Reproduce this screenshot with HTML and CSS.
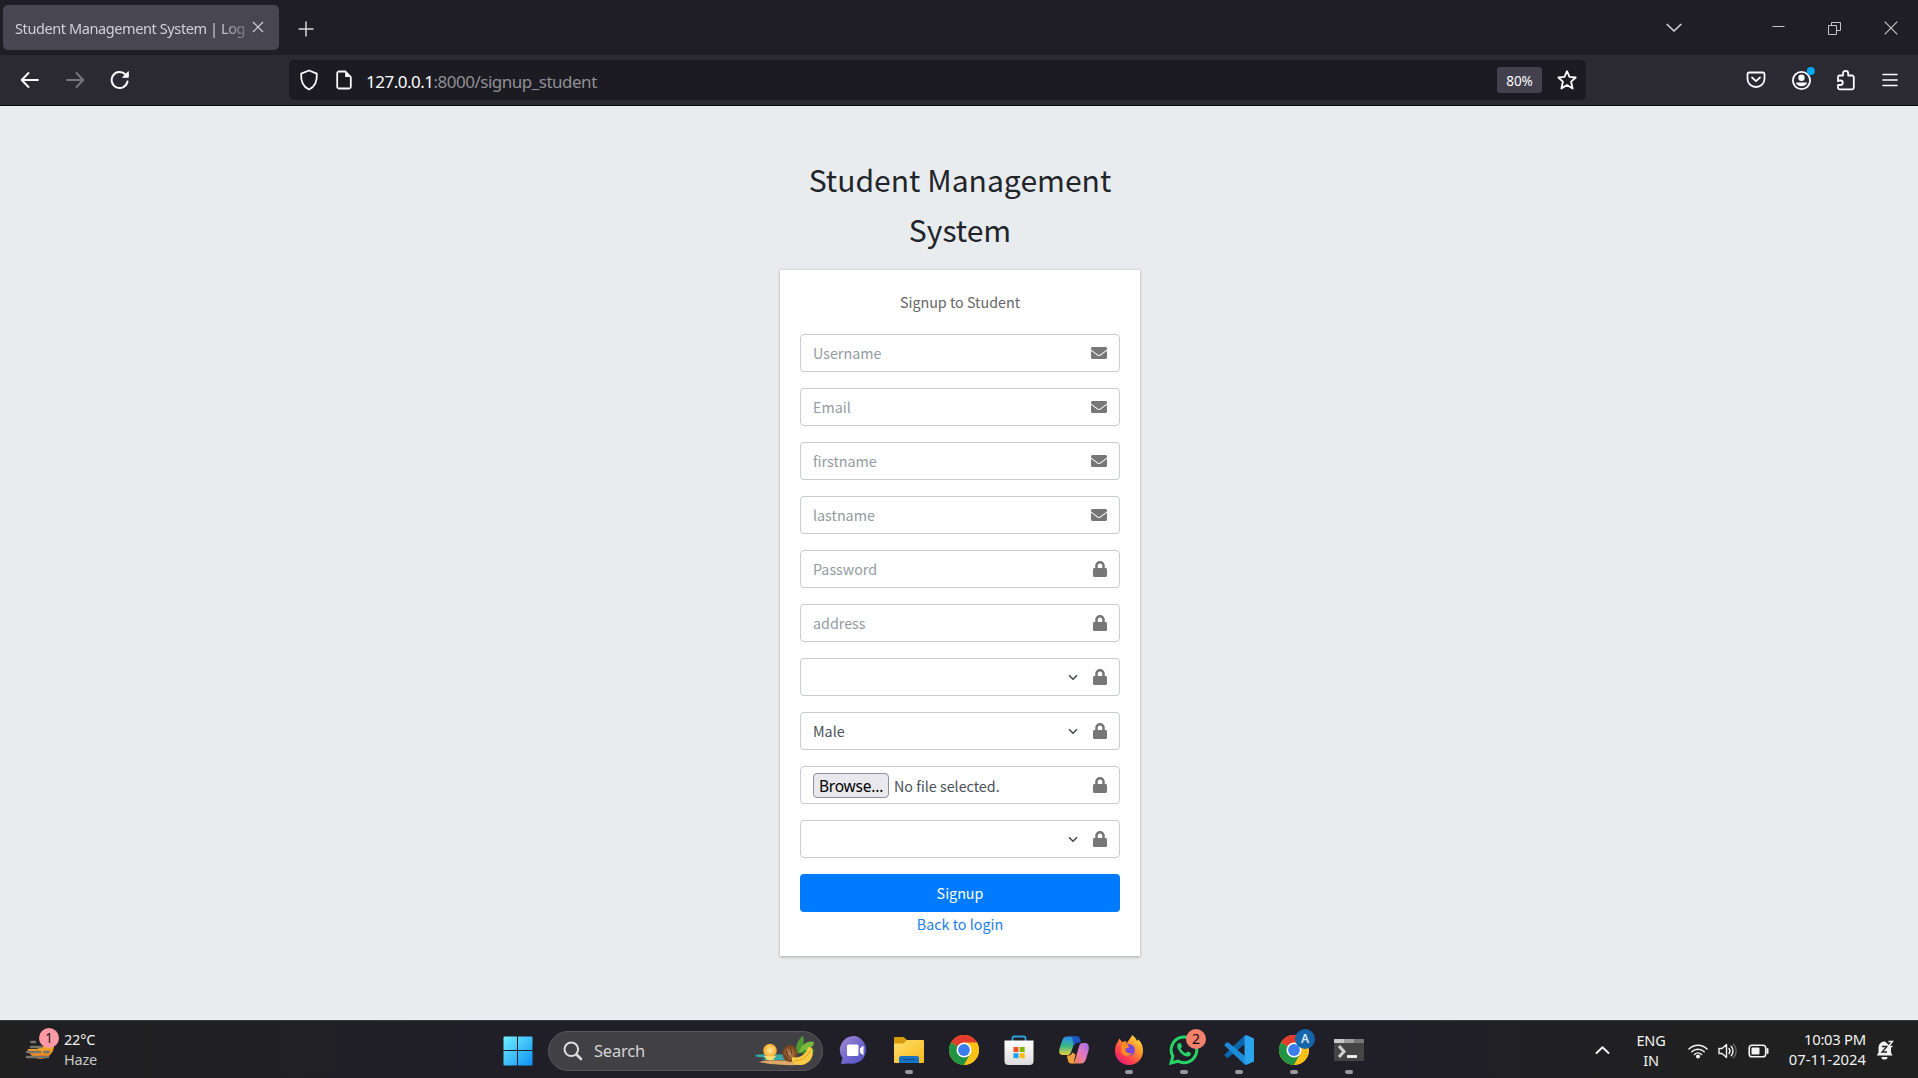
FILE: index.html
```html
<!DOCTYPE html>
<html lang="en">
<head>
<meta charset="utf-8">
<title>Student Management System | Log in</title>
<link rel="stylesheet" href="styles.css">
</head>
<body>
<svg class="defs" width="0" height="0" aria-hidden="true">
  <defs>
    <symbol id="lock" viewBox="0 0 448 512"><path fill="currentColor" d="M400 224h-24v-72C376 68.2 307.8 0 224 0S72 68.2 72 152v72H48c-26.5 0-48 21.5-48 48v192c0 26.5 21.5 48 48 48h352c26.5 0 48-21.5 48-48V272c0-26.5-21.5-48-48-48zm-104 0H152v-72c0-39.7 32.3-72 72-72s72 32.3 72 72v72z"/></symbol>
    <symbol id="envelope" viewBox="0 0 512 512"><path fill="currentColor" d="M502.3 190.8c3.9-3.1 9.7-.2 9.7 4.7V400c0 26.5-21.5 48-48 48H48c-26.5 0-48-21.5-48-48V195.6c0-5 5.7-7.8 9.7-4.7 22.4 17.4 52.1 39.5 154.1 113.6 21.1 15.4 56.7 47.8 92.2 47.6 35.7.3 72-32.8 92.3-47.6 102-74.1 131.6-96.3 154-113.7zM256 320c23.2.4 56.6-29.2 73.4-41.4 132.7-96.3 142.8-104.7 173.4-128.7 5.8-4.5 9.2-11.5 9.2-18.9v-19c0-26.5-21.5-48-48-48H48c-26.5 0-48 21.5-48 48v19c0 7.4 3.4 14.3 9.2 18.9 30.6 23.9 40.7 32.4 173.4 128.7 16.8 12.2 50.2 41.8 73.4 41.4z"/></symbol>
    <symbol id="caret" viewBox="0 0 10 7"><path d="M1 1.2 5 5.2 9 1.2" fill="none" stroke="#40464c" stroke-width="1.5"/></symbol>
    <symbol id="chrome" viewBox="0 0 30 30">
      <circle cx="15" cy="15" r="15" fill="#fbc116"/>
      <path d="M15 15 2 7.500A15 15 0 0 1 28 7.500Z" fill="#e33b2e"/>
      <path d="M2 7.500A15 15 0 0 0 15 30L21.500 18.750 15 15Z" fill="#229342"/>
      <path d="M15 7.500H28A15 15 0 0 1 15 30L21.500 18.750Z" fill="#fbc116"/>
      <circle cx="15" cy="15" r="7.500" fill="#fff"/><circle cx="15" cy="15" r="5.900" fill="#3b7ded"/>
    </symbol>
  </defs>
</svg>

<header class="browser">
  <div class="tab-strip">
    <div class="tab">
      <span class="tab-title">Student Management System | Log</span>
      <svg class="tab-close" width="12" height="12" viewBox="0 0 12 12"><path d="M1 1 11 11M11 1 1 11" stroke="#d4d3da" stroke-width="1.200"/></svg>
    </div>
    <svg class="new-tab" width="16" height="16" viewBox="0 0 16 16"><path d="M8 .5V15.500M.5 8H15.500" stroke="#d8d8dc" stroke-width="1.500"/></svg>
    <div class="window-controls">
      <svg class="list-tabs" width="16" height="10" viewBox="0 0 16 10"><path d="M1.200 1.500 8 8 14.800 1.500" fill="none" stroke="#d0d0d4" stroke-width="1.700" stroke-linecap="round" stroke-linejoin="round"/></svg>
      <svg width="13" height="14" viewBox="0 0 13 14"><path d="M.5 5.500H12.500" stroke="#c4c4c8"/></svg>
      <svg width="13" height="14" viewBox="0 0 13 14"><path d="M.5 4.500h8v9h-8zM3.500 4.500V1.500h9v8h-4" fill="none" stroke="#c4c4c8"/></svg>
      <svg width="14" height="14" viewBox="0 0 14 14"><path d="M.7.7 13.300 13.300M13.300.7.7 13.300" stroke="#c4c4c8" stroke-width="1.200"/></svg>
    </div>
  </div>
  <div class="toolbar">
    <nav class="nav-buttons">
      <svg width="20" height="18" viewBox="0 0 20 18" fill="none" stroke="#fbfbfe" stroke-width="1.900" stroke-linecap="round" stroke-linejoin="round"><path d="M18 9H2M8.500 2 1.700 9 8.500 16"/></svg>
      <svg width="20" height="18" viewBox="0 0 20 18" fill="none" stroke="#77767e" stroke-width="1.900" stroke-linecap="round" stroke-linejoin="round"><path d="M2 9H18M11.500 2 18.300 9 11.500 16"/></svg>
      <svg width="20" height="20" viewBox="0 0 20 20" fill="none" stroke="#fbfbfe" stroke-width="2" stroke-linecap="round"><path d="M17.500 11.500A8 8 0 1 1 15.500 4.500"/><path d="M18.300 2v5.300h-5.300z" fill="#fbfbfe" stroke-width="1" stroke-linejoin="round"/></svg>
    </nav>
    <div class="url-bar">
      <svg width="20" height="22" viewBox="0 0 20 22"><path d="M10 1.500 17.800 4.600C18.300 12 15.500 18 10 20.500 4.500 18 1.700 12 2.200 4.600Z" fill="none" stroke="#fbfbfe" stroke-width="1.800" stroke-linejoin="round"/></svg>
      <svg width="16" height="20" viewBox="0 0 16 20"><path d="M9.500 1.500H3A1.800 1.800 0 0 0 1.200 3.300V16.700A1.800 1.800 0 0 0 3 18.500H13A1.800 1.800 0 0 0 14.800 16.700V7Z" fill="none" stroke="#fbfbfe" stroke-width="1.800" stroke-linejoin="round"/><path d="M9.200 1.500V7H14.800Z" fill="#fbfbfe"/></svg>
      <span class="url"><b>127.0.0.1</b>:8000/signup_student</span>
      <span class="zoom-level">80%</span>
      <svg class="bookmark" width="22" height="22" viewBox="0 0 22 22"><path d="M11 2.200 13.500 7.900 19.700 8.500 15.100 12.700 16.600 19.500 11 16 5.400 19.500 6.900 12.700 2.300 8.500 8.500 7.900Z" fill="none" stroke="#fbfbfe" stroke-width="1.800" stroke-linejoin="round"/></svg>
    </div>
    <div class="extensions">
      <svg width="20" height="20" viewBox="0 0 20 20" fill="none" stroke="#fbfbfe" stroke-width="1.800" stroke-linecap="round" stroke-linejoin="round"><path d="M3 2.500H17A1.600 1.600 0 0 1 18.500 4V9A8.500 8 0 0 1 1.500 9V4A1.600 1.600 0 0 1 3 2.500ZM6 7.500 10 11.200 14 7.500"/></svg>
      <svg width="24" height="26" viewBox="0 0 24 26"><circle cx="10.500" cy="14.500" r="8.600" fill="none" stroke="#fbfbfe" stroke-width="1.800"/><circle cx="10.500" cy="11.800" r="3.200" fill="#fbfbfe"/><path d="M5 16.500H16C15.500 19 13.200 20.300 10.500 20.300S5.500 19 5 16.500Z" fill="#fbfbfe"/><circle cx="19.800" cy="5" r="4" fill="#00a9f4"/></svg>
      <svg width="20" height="22" viewBox="0 0 20 22"><path d="M2 13V9.500C2 6.500 2.500 6.500 4 6.500H7V4.500A2.600 2.600 0 0 1 12.200 4.500V6.500H16A1.800 1.800 0 0 1 17.800 8.300V18.500A1.800 1.800 0 0 1 16 20.300H3.800A1.800 1.800 0 0 1 2 18.500V16H4.500A2.200 2.200 0 0 0 4.500 11.500H2" fill="none" stroke="#fbfbfe" stroke-width="1.800" stroke-linejoin="round"/></svg>
      <svg width="16" height="14" viewBox="0 0 16 14"><path d="M1 1.500H15M1 7H15M1 12.500H15" stroke="#fbfbfe" stroke-width="1.600" stroke-linecap="round"/></svg>
    </div>
  </div>
</header>

<main class="page">
  <h1 class="site-title">Student Management System</h1>
  <section class="card">
    <p class="card-message">Signup to Student</p>
    <form class="form">
      <div class="field"><span class="placeholder">Username</span><svg class="icon-envelope"><use href="#envelope"/></svg></div>
      <div class="field"><span class="placeholder">Email</span><svg class="icon-envelope"><use href="#envelope"/></svg></div>
      <div class="field"><span class="placeholder">firstname</span><svg class="icon-envelope"><use href="#envelope"/></svg></div>
      <div class="field"><span class="placeholder">lastname</span><svg class="icon-envelope"><use href="#envelope"/></svg></div>
      <div class="field"><span class="placeholder">Password</span><svg class="icon-lock"><use href="#lock"/></svg></div>
      <div class="field"><span class="placeholder">address</span><svg class="icon-lock"><use href="#lock"/></svg></div>
      <div class="field"><span class="value"></span><svg class="caret"><use href="#caret"/></svg><svg class="icon-lock"><use href="#lock"/></svg></div>
      <div class="field"><span class="value">Male</span><svg class="caret"><use href="#caret"/></svg><svg class="icon-lock"><use href="#lock"/></svg></div>
      <div class="field"><span class="browse">Browse...</span><span class="value file-name">No file selected.</span><svg class="icon-lock"><use href="#lock"/></svg></div>
      <div class="field"><span class="value"></span><svg class="caret"><use href="#caret"/></svg><svg class="icon-lock"><use href="#lock"/></svg></div>
      <button class="submit" type="button">Signup</button>
    </form>
    <a class="back-link">Back to login</a>
  </section>
</main>

<footer class="taskbar">
  <div class="weather">
    <div class="weather-icon">
      <svg width="30" height="26" viewBox="0 0 30 26">
        <defs><linearGradient id="sun" x1="0" y1="0" x2="0" y2="1"><stop offset="0" stop-color="#f5b52f"/><stop offset="1" stop-color="#ec7a16"/></linearGradient></defs>
        <path d="M2.500 11A13.500 13.500 0 0 0 29 8L24 6 12 11Z" fill="url(#sun)"/>
        <g stroke="#77736d" stroke-width="2.600" stroke-linecap="round"><path d="M6.500 4H10M6 9H16M2 14H15M2 19H23M19.500 14H23.500"/></g>
      </svg>
      <span class="badge badge-weather">1</span>
    </div>
    <div class="weather-text"><span class="temp">22°C</span><span class="cond">Haze</span></div>
  </div>

  <div class="apps">
    <svg class="start" width="30" height="30" viewBox="0 0 30 30">
      <defs><linearGradient id="win" x1="0" y1="0" x2="1" y2="1"><stop offset="0" stop-color="#72f0ff"/><stop offset="1" stop-color="#0b90f5"/></linearGradient></defs>
      <path fill="url(#win)" d="M1.500.5H14V14H.5V1.500A1 1 0 0 1 1.500.5ZM15 .5H28.500A1 1 0 0 1 29.500 1.500V14H15ZM.5 15H14V29.500H1.500A1 1 0 0 1 .5 28.500ZM15 15H29.500V28.500A1 1 0 0 1 28.500 29.500H15Z"/>
    </svg>
    <div class="search">
      <svg width="20" height="20" viewBox="0 0 20 20" fill="none" stroke="#dededf" stroke-linecap="round"><circle cx="8.300" cy="8.300" r="6.800" stroke-width="2"/><path d="M13.500 13.500 18 18" stroke-width="2.600"/></svg>
      <span class="search-label">Search</span>
      <svg width="62" height="32" viewBox="0 0 62 32">
        <defs><radialGradient id="glow"><stop offset="0" stop-color="#ffe9a0"/><stop offset="1" stop-color="#f9a826"/></radialGradient><radialGradient id="coco"><stop offset="0" stop-color="#c08a50"/><stop offset="1" stop-color="#6d3f1d"/></radialGradient></defs>
        <path d="M1 20C8 18.500 26 19 34 20L32 25H8L12 23 2 21.500Z" fill="#35a6a4"/>
        <path d="M5 27C14 24 26 26 40 25.500L48 29.500C36 31 26 29.500 16 29Z" fill="#dfa867"/>
        <circle cx="16" cy="15.500" r="6.800" fill="url(#glow)"/><path d="M10 21H22L19 25H13Z" fill="#f8dc72"/>
        <path d="M42 19C41 10 45 3 49 1 51 6 49 13 46 18Z" fill="#4f9a36"/><path d="M45 18C47 9 54 5 60 7 60 13 52 17 45 18Z" fill="#78b83c"/><path d="M47 18C51 14 57 13 61 15 58 20 52 20 47 18Z" fill="#3b8431"/>
        <ellipse cx="36" cy="18.500" rx="7.500" ry="8.500" fill="url(#coco)"/><path d="M32 16 35 23M36 12 38 19M31 20 33 25" stroke="#5b3317" stroke-width="1"/>
        <path d="M38 22C46 24 52 19 54 12L58 13C61 22 55 30 46 30 40 30 37 27 38 22Z" fill="#f9cb45"/><path d="M40 26C48 26 54 21 56.500 15" fill="none" stroke="#d39a28" stroke-width=".9"/>
      </svg>
    </div>
    <div class="dock">
      <div class="app">
        <svg width="30" height="30" viewBox="0 0 30 30"><defs><linearGradient id="chat" x1="0" y1="0" x2="1" y2="1"><stop offset="0" stop-color="#a58ad0"/><stop offset=".6" stop-color="#6a63cc"/><stop offset="1" stop-color="#4b50bf"/></linearGradient></defs><path d="M16 1A14 14 0 1 1 10 28.500L2 29 3.500 23A14 14 0 0 1 16 1Z" fill="url(#chat)"/><rect x="8" y="9.500" width="11.500" height="11.500" rx="1.500" fill="#fff"/><path d="M21 13.500 24.500 10.500V20.500L21 17.500Z" fill="#fff"/></svg>
      </div>
      <div class="app running">
        <svg width="30" height="30" viewBox="0 0 30 30"><defs><linearGradient id="fold" x1="0" y1="0" x2="1" y2="1"><stop offset="0" stop-color="#ffdf6c"/><stop offset="1" stop-color="#f6b91c"/></linearGradient></defs><path d="M0 3A1 1 0 0 1 1 2H9.500L13 5V12H0Z" fill="#d59b0a"/><path d="M0 8.500H9L13 5H29A1 1 0 0 1 30 6V27A1 1 0 0 1 29 28H1A1 1 0 0 1 0 27Z" fill="url(#fold)"/><path d="M5 28V23A2 2 0 0 1 7 21H23A2 2 0 0 1 25 23V28Z" fill="#1773c4"/><path d="M9 24.500H21" stroke="#0c4f94" stroke-width="1.200"/></svg>
      </div>
      <div class="app"><svg width="30" height="30"><use href="#chrome"/></svg></div>
      <div class="app">
        <svg width="30" height="30" viewBox="0 0 30 30"><defs><linearGradient id="bag" x1="0" y1="0" x2="0" y2="1"><stop offset="0" stop-color="#fff"/><stop offset="1" stop-color="#dcdcdd"/></linearGradient></defs><path d="M8.500 6V3A1.500 1.500 0 0 1 10 1.500H20A1.500 1.500 0 0 1 21.500 3V6" fill="none" stroke="#2aa2de" stroke-width="1.800"/><path d="M.5 5.500H29.500V26A4 4 0 0 1 25.500 30H4.500A4 4 0 0 1 .5 26Z" fill="url(#bag)"/><path d="M9.500 12H14.500V17H9.500Z" fill="#f04f23"/><path d="M15.700 12H20.700V17H15.700Z" fill="#7db700"/><path d="M9.500 18.200H14.500V23.200H9.500Z" fill="#1ba0e8"/><path d="M15.700 18.200H20.700V23.200H15.700Z" fill="#fdb813"/></svg>
      </div>
      <div class="app">
        <svg width="30" height="30" viewBox="0 0 30 30"><defs><linearGradient id="co1" x1="0" y1="0" x2="0" y2="1"><stop offset="0" stop-color="#2a8df0"/><stop offset=".5" stop-color="#35b58d"/><stop offset="1" stop-color="#e9d03a"/></linearGradient><linearGradient id="co2" x1="1" y1="0" x2="0" y2="1"><stop offset="0" stop-color="#a06cf2"/><stop offset=".5" stop-color="#e77ab5"/><stop offset="1" stop-color="#f8853e"/></linearGradient></defs><path d="M8 1.500H18L15.500 7 12 17.500C11 19.500 10 20 8 20H4C0 20-.5 17.500.7 13L3 6C4 2.500 6 1.500 8 1.500Z" fill="url(#co1)"/><path d="M13 1.500H18.500C20.500 1.500 21.300 4 22 7.500H19.500C17 7.500 16 8.500 15 11.500Z" fill="#1c55c4"/><path d="M8 20.500C11 20.500 12.500 20 13.500 17.500L16.500 19.500 14.500 28.500H12C9.500 28.500 8.500 25 8 20.500Z" fill="#f0a03c"/><path d="M22 28.500H13C15.500 27.500 16 25.500 17 22L20 11.500C20.800 9 22 8 24 8H26C30 8 30.500 12 29.300 16.500L27 24C26 27 24.500 28.500 22 28.500Z" fill="url(#co2)"/></svg>
      </div>
      <div class="app running">
        <svg width="30" height="30" viewBox="0 0 30 30"><defs><linearGradient id="ff" x1="1" y1="0" x2="0.200" y2="1"><stop offset="0" stop-color="#fff04f"/><stop offset=".4" stop-color="#ff9a2b"/><stop offset=".75" stop-color="#ff3d4d"/><stop offset="1" stop-color="#e3177f"/></linearGradient></defs><path d="M18.500 0C20.500 2 22 3.500 23 6L24.500 4.500C28 8 29 12 29 16A14 14 0 0 1 1 16C1 11 2.500 8.500 4 6.500L5.500 3.500 8 7 12 6 12.500 8.500C15 5 16.500 3 18.500 0Z" fill="url(#ff)"/><circle cx="15" cy="15" r="6" fill="#7b45d6"/><path d="M8 7 14 10 15 12.500 11.500 13.500C11 17 14 19.500 18 18 15 23 7 21 7 15Z" fill="#ff8b22"/></svg>
      </div>
      <div class="app running">
        <svg width="30" height="30" viewBox="0 0 30 30"><path d="M2 28 3.900 21.300A12.800 12.800 0 1 1 9 26.200Z" fill="none" stroke="#27d366" stroke-width="3"/><path d="M10 8C8 9 7.500 11 9 14 11 18 14.500 21 18 21.500 20.500 22 22 20 22 18L18.500 16.500 16.800 18.300C14.500 17.500 12.500 15.500 11.600 13.500L13 11.700 11.800 8.200Z" fill="#27d366"/></svg>
        <span class="badge badge-chat">2</span>
      </div>
      <div class="app running">
        <svg width="30" height="30" viewBox="0 0 30 30"><path d="M21.500 8.500 4 22.800 2.800 22.800.6 20.500V19.500L20 1 21.500 0Z" fill="#0b67ad"/><path d="M21.500 21.500 4 7.200H2.800L.6 9.500V10.500L20 29 21.500 30Z" fill="#1c8bd8"/><path d="M22 0 30 3.500V26.500L22 30 20.500 28V2Z" fill="#2ba4f0"/></svg>
      </div>
      <div class="app running">
        <svg width="30" height="30"><use href="#chrome"/></svg>
        <span class="badge badge-profile">A</span>
      </div>
      <div class="app running">
        <svg width="30" height="30" viewBox="0 0 30 30"><path d="M0 4H30V25A1 1 0 0 1 29 26H1A1 1 0 0 1 0 25Z" fill="#454545"/><path d="M0 8V5A1 1 0 0 1 1 4H10V8Z" fill="#c9c9c9"/><path d="M10 4H20V8H10Z" fill="#9d9d9d"/><path d="M20 4H29A1 1 0 0 1 30 5V8H20Z" fill="#777"/><path d="M5 11 10 16.500 5 22" fill="none" stroke="#cfcfcf" stroke-width="3"/><path d="M13 21.500H23" stroke="#f4f4f4" stroke-width="2.800"/></svg>
      </div>
    </div>
  </div>

  <div class="tray">
    <svg class="tray-up" width="15" height="10" viewBox="0 0 15 10"><path d="M1.500 8 7.500 2.200 13.500 8" fill="none" stroke="#f2f2f2" stroke-width="1.900" stroke-linecap="round" stroke-linejoin="round"/></svg>
    <div class="lang"><span>ENG</span><span>IN</span></div>
    <div class="status">
      <svg width="20" height="16" viewBox="0 0 20 16" fill="none" stroke="#f2f2f2" stroke-width="1.500" stroke-linecap="round"><path d="M1 6A12.500 12.500 0 0 1 19 6M3.800 8.800A8.700 8.700 0 0 1 16.200 8.800M6.500 11.500A5 5 0 0 1 13.500 11.500"/><circle cx="10" cy="13.500" r="1.300" fill="#f2f2f2"/></svg>
      <svg width="20" height="18" viewBox="0 0 20 18" fill="none" stroke="#f2f2f2" stroke-width="1.400" stroke-linecap="round" stroke-linejoin="round"><path d="M1 6.500H4L8.500 2.500V15.500L4 11.500H1Z"/><path d="M11 6.500A4 4 0 0 1 11 11.500M13.200 4.300A7 7 0 0 1 13.200 13.700"/><path d="M15.500 2.200A10 10 0 0 1 15.500 15.800" stroke="#66666a"/></svg>
      <svg width="21" height="14" viewBox="0 0 21 14"><rect x="1.200" y="1.200" width="16.500" height="11.500" rx="2.800" fill="none" stroke="#f2f2f2" stroke-width="1.600"/><rect x="3.500" y="3.500" width="8" height="7" rx="1" fill="#f2f2f2"/><path d="M19.500 5V9" stroke="#f2f2f2" stroke-width="2" stroke-linecap="round"/></svg>
    </div>
    <div class="clock"><span class="time">10:03 PM</span><span class="date">07-11-2024</span></div>
    <svg class="bell" width="18" height="20" viewBox="0 0 18 20"><path d="M2.500 7A6 6 0 0 1 9 1.500L15 7V12.500L16.500 15.500H.8L2.500 12.500Z" fill="#f2f2f2"/><path d="M5.500 17H11.500A3 2.600 0 0 1 5.500 17Z" fill="#f2f2f2"/><path d="M6 6.500H11L6 12H11" fill="none" stroke="#222224" stroke-width="1.300"/><path d="M12.500 1.500H16.500L12.500 6.500H16.500" fill="none" stroke="#f2f2f2" stroke-width="1.400"/></svg>
  </div>
</footer>
</body>
</html>
```
FILE: styles.css
```css
* { box-sizing: border-box; }

body {
  margin: 0;
  width: 1918px;
  height: 1078px;
  display: grid;
  grid-template-rows: 106px 914px 58px;
  overflow: hidden;
  background: #e9ecef;
  font-family: "Noto Sans", "Open Sans", sans-serif;
}

.defs { position: absolute; }
svg { display: block; flex: none; }

/* Browser chrome */
.browser {
  display: grid;
  grid-template-rows: 55px 50px;
  border-bottom: 1px solid #0c0c0d;
  background: #2b2a33;
}

.tab-strip {
  display: flex;
  align-items: center;
  padding-left: 3px;
  background: #1f1e25;
}

.tab {
  display: flex;
  align-items: center;
  width: 276px;
  height: 45px;
  padding: 0 15px 0 12px;
  border-radius: 5px;
  background: #484653;
}

.tab-title {
  width: 231px;
  overflow: hidden;
  white-space: nowrap;
  font-size: 14.5px;
  letter-spacing: -0.4px;
  color: #d2d1d8;
  -webkit-mask-image: linear-gradient(90deg, #000 88%, rgba(0, 0, 0, .3));
  mask-image: linear-gradient(90deg, #000 88%, rgba(0, 0, 0, .3));
}

.tab-close { margin: 0 0 1px 6px; }
.new-tab { margin: 2px 0 0 19px; }

.window-controls {
  display: flex;
  align-items: center;
  gap: 43px;
  margin-left: auto;
  padding-right: 20px;
}

.list-tabs { margin-right: 47px; }

.toolbar { display: flex; align-items: center; }

.nav-buttons {
  display: flex;
  align-items: center;
  gap: 25px;
  width: 289px;
  padding-left: 20px;
}

.url-bar {
  display: flex;
  align-items: center;
  width: 1297px;
  height: 40px;
  padding: 0 8px 0 10px;
  border-radius: 5px;
  background: #1c1b22;
}

.url-bar svg + svg { margin-left: 17px; }

.url {
  margin: 2px 0 0 14px;
  font-size: 17px;
  letter-spacing: -0.5px;
  color: #8f8f96;
}

.url b { font-weight: 400; color: #fbfbfe; }

.zoom-level {
  width: 45px;
  height: 26px;
  margin-left: auto;
  border-radius: 3px;
  background: #42414d;
  color: #fbfbfe;
  font-size: 13.5px;
  line-height: 28px;
  text-align: center;
}

.bookmark { margin-left: 14px; }

.extensions {
  display: flex;
  align-items: center;
  gap: 25px;
  margin-left: auto;
  padding-right: 20px;
}

.extensions svg:nth-child(2) { margin: 0 -4px 3px 0; }
.extensions svg:nth-child(3) { margin-right: 1px; }

/* Signup page */
.page {
  display: flex;
  flex-direction: column;
  align-items: center;
  padding-top: 48px;
  padding-left: 2px;
  background: #e9ecef;
  font-family: "Noto Sans CJK SC", sans-serif;
}

.site-title {
  width: 360px;
  margin: 0 0 15px;
  font-size: 30.1px;
  font-weight: 400;
  line-height: 50.4px;
  text-align: center;
  color: #212529;
}

.card {
  display: flex;
  flex-direction: column;
  width: 360px;
  height: 686px;
  padding: 20px;
  background: #fff;
  box-shadow: 0 0 1px rgba(0, 0, 0, .2), 0 1px 3px rgba(0, 0, 0, .25);
  font-size: 14.3px;
  line-height: 24px;
  text-align: center;
}

.card-message { margin: 0 0 20px; color: #666; }

.form { display: flex; flex-direction: column; gap: 16px; }

.field {
  display: flex;
  align-items: center;
  height: 38px;
  padding: 0 12px;
  border: 1px solid #c9ccd2;
  border-radius: 4px;
  color: #777;
}

.placeholder, .value { flex: 1; text-align: left; }
.placeholder { color: #939ba2; }
.value { color: #495057; }

.icon-envelope { width: 16px; height: 16px; }
.icon-lock { width: 14px; height: 16px; }
.caret { width: 10px; height: 7px; margin: 1px 15px 0 0; }

.browse {
  width: 76px;
  height: 25px;
  margin: 1px 5px 0 0;
  border: 1px solid #8f8f9d;
  border-radius: 4px;
  background: #e9e9ed;
  color: #000;
  font: 15.5px/24px "Noto Sans", sans-serif;
  letter-spacing: -0.2px;
  text-align: center;
}

.file-name { padding-top: 2px; }

.submit {
  height: 38px;
  padding: 0;
  border: 0;
  border-radius: 4px;
  background: #007bff;
  color: #fff;
  font: inherit;
}

.back-link { color: #1b7ee6; }

/* Taskbar */
.taskbar {
  display: grid;
  grid-template-columns: 503px 1fr auto;
  border-top: 1px solid #3a3a3e;
  background: linear-gradient(90deg, #202021, #201f28 30%, #201f28 70%, #202021 88%);
  color: #f2f2f2;
}

.weather { display: flex; gap: 9px; padding-left: 25px; }
.weather-icon { position: relative; width: 30px; padding-top: 17px; }

.badge {
  position: absolute;
  width: 20px;
  height: 20px;
  border-radius: 50%;
  font-size: 14px;
  line-height: 20px;
  text-align: center;
}

.badge-weather { left: 14px; top: 7px; background: #ff99a4; color: #222; }
.badge-chat { left: 30px; top: 8px; background: #f5816c; color: #111; }
.badge-profile { left: 29px; top: 8px; background: #1565a8; color: #dcebf7; font-size: 12px; font-weight: 600; }

.weather-text, .lang, .clock {
  display: flex;
  flex-direction: column;
  padding-top: 8px;
  font-size: 14.5px;
  line-height: 20px;
  letter-spacing: -0.2px;
}

.cond { color: #c9c9c9; }

.apps { display: flex; align-items: center; }
.start { margin: 2px 0 0 -0.5px; }

.search {
  display: flex;
  align-items: center;
  width: 275px;
  height: 40px;
  margin: 2px 0 0 15.5px;
  padding: 0 6px 0 14px;
  border: 1px solid #58575d;
  border-radius: 20px;
  background: #414045;
}

.search-label {
  flex: 1;
  margin-left: 11px;
  padding-bottom: 1px;
  font-size: 16.5px;
  letter-spacing: -0.2px;
  color: #d4d4d6;
}

.dock { display: flex; margin-left: 3px; align-self: stretch; }
.app { position: relative; width: 55px; padding: 14px 0 0 13px; }

.running::after {
  content: "";
  position: absolute;
  left: 24px;
  top: 49px;
  width: 8px;
  height: 4px;
  border-radius: 2px;
  background: #99989e;
}

.tray { display: flex; padding-right: 23px; }
.tray-up { margin: 24px 26px 0 0; }
.lang { align-items: center; width: 30px; padding-top: 9px; }
.status { display: flex; align-items: center; gap: 10px; margin: 2px 17px 0 22px; }
.clock { align-items: flex-end; width: 80px; font-size: 14.8px; letter-spacing: 0; }
.time { letter-spacing: -0.25px; }
.bell { margin: 19px 1px 0 10px; }
```
